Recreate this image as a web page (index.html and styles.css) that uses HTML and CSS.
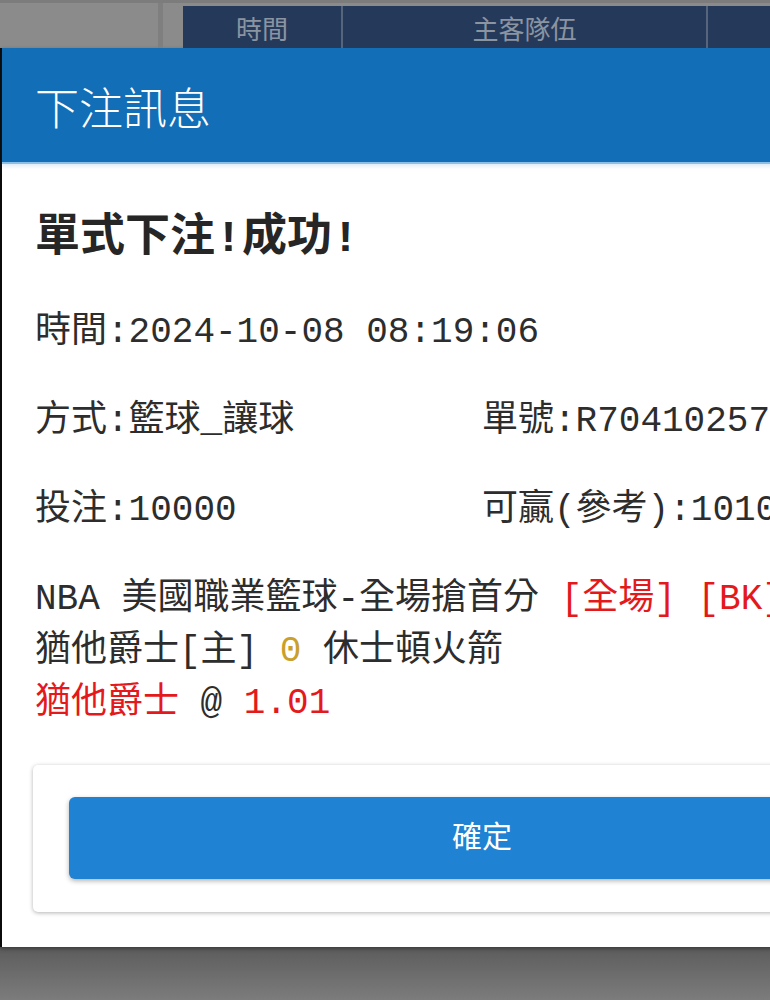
FILE: index.html
```html
<!DOCTYPE html>
<html lang="zh-Hant">

<head>
  <meta charset="UTF-8">
  <meta name="viewport" content="width=device-width, initial-scale=1.0">
  <title>下注訊息</title>
  <link rel="stylesheet" href="styles.css">
</head>

<body>
  <div class="page-strip">
    <div class="side"></div>
    <div class="side-rule"></div>
    <div class="side narrow"></div>
    <div class="table-head">
      <div class="cell time">時間</div>
      <div class="cell teams">主客隊伍</div>
      <div class="cell rest"></div>
    </div>
  </div>

  <section class="modal">
    <header class="modal-head">下注訊息</header>
    <div class="modal-body">
      <h2 class="result">單式下注!成功!</h2>
      <div class="row">時間:2024-10-08 08:19:06</div>
      <div class="row two">
        <span>方式:籃球_讓球</span>
        <span>單號:R704102576</span>
      </div>
      <div class="row two">
        <span>投注:10000</span>
        <span>可贏(參考):10100</span>
      </div>
      <div class="ticket">
        <div>NBA 美國職業籃球-全場搶首分 <span class="red">[全場]</span> <span class="red">[BK]</span></div>
        <div>猶他爵士[主] <span class="gold">0</span> 休士頓火箭</div>
        <div><span class="red">猶他爵士</span> @ <span class="red">1.01</span></div>
      </div>
      <div class="actions">
        <button class="confirm">確定</button>
      </div>
    </div>
  </section>
</body>

</html>
```

FILE: styles.css
```css
* {
  box-sizing: border-box;
}

html,
body {
  overflow: hidden;
}

body {
  margin: 0;
  height: 1000px;
  background: linear-gradient(#585858 0, #5c5c5c 947px, #7c7c7c 1000px);
  font-family: "Liberation Mono", "Noto Sans CJK TC", monospace;
  color: #2d2d2d;
}

/* page behind the dialog */
.page-strip {
  display: flex;
  height: 48px;
  background: #8b8b8b;
  border-top: 3px solid #7c7c7c;
  overflow: hidden;
}

.side {
  width: 158px;
}

.side-rule {
  width: 5px;
  background: #7f7f7f;
}

.side.narrow {
  width: 20px;
}

.table-head {
  flex: 1;
  display: flex;
  margin-top: 3px;
  background: #253a5b;
  font-family: "Noto Sans CJK TC", sans-serif;
  font-size: 26px;
  color: #8b94a1;
}

.cell {
  display: flex;
  justify-content: center;
  align-items: center;
  height: 42px;
  border-right: 2px solid #56657c;
}

.cell.time {
  width: 160px;
}

.cell.teams {
  width: 365px;
}

.cell.rest {
  flex: 1;
  border: none;
}

/* dialog */
.modal {
  width: 962px;
  background: #fff;
  border-left: 2px solid #0b0b0b;
  padding-bottom: 35px;
  box-shadow: 0 2px 4px rgba(0, 0, 0, 0.35);
}

.modal-head {
  height: 116px;
  display: flex;
  align-items: center;
  padding: 2px 33px 0;
  background: #126eb6;
  border-bottom: 2px solid #8cbfe6;
  box-shadow: 0 2px 4px rgba(18, 110, 182, 0.15);
  font-family: "Noto Sans CJK TC", sans-serif;
  font-size: 44px;
  font-weight: 300;
  color: #fff;
}

.modal-body {
  display: flex;
  flex-direction: column;
  gap: 37px;
  padding: 50px 33px 0;
  font-size: 36px;
}

.result {
  margin: 0 0 4px;
  font-size: 45px;
  line-height: 52px;
  font-weight: bold;
  color: #262626;
}

.row {
  line-height: 52px;
  white-space: nowrap;
}

.row.two {
  display: grid;
  grid-template-columns: 1fr 1fr;
}

.ticket {
  line-height: 52px;
  white-space: nowrap;
}

.red {
  color: #e3191c;
}

.gold {
  color: #c9a02a;
}

.actions {
  margin: -2px -2px 0;
  padding: 32px 36px 33px;
  border-radius: 5px;
  background: #fff;
  box-shadow: 0 1px 4px rgba(0, 0, 0, 0.3);
}

.confirm {
  display: block;
  width: 100%;
  height: 82px;
  padding: 0 0 8px;
  border: none;
  border-radius: 6px;
  background: #1f82d3;
  box-shadow: 0 2px 5px rgba(0, 0, 0, 0.3);
  font-family: "Noto Sans CJK TC", sans-serif;
  font-size: 30px;
  font-weight: 400;
  color: #fff;
}
```
